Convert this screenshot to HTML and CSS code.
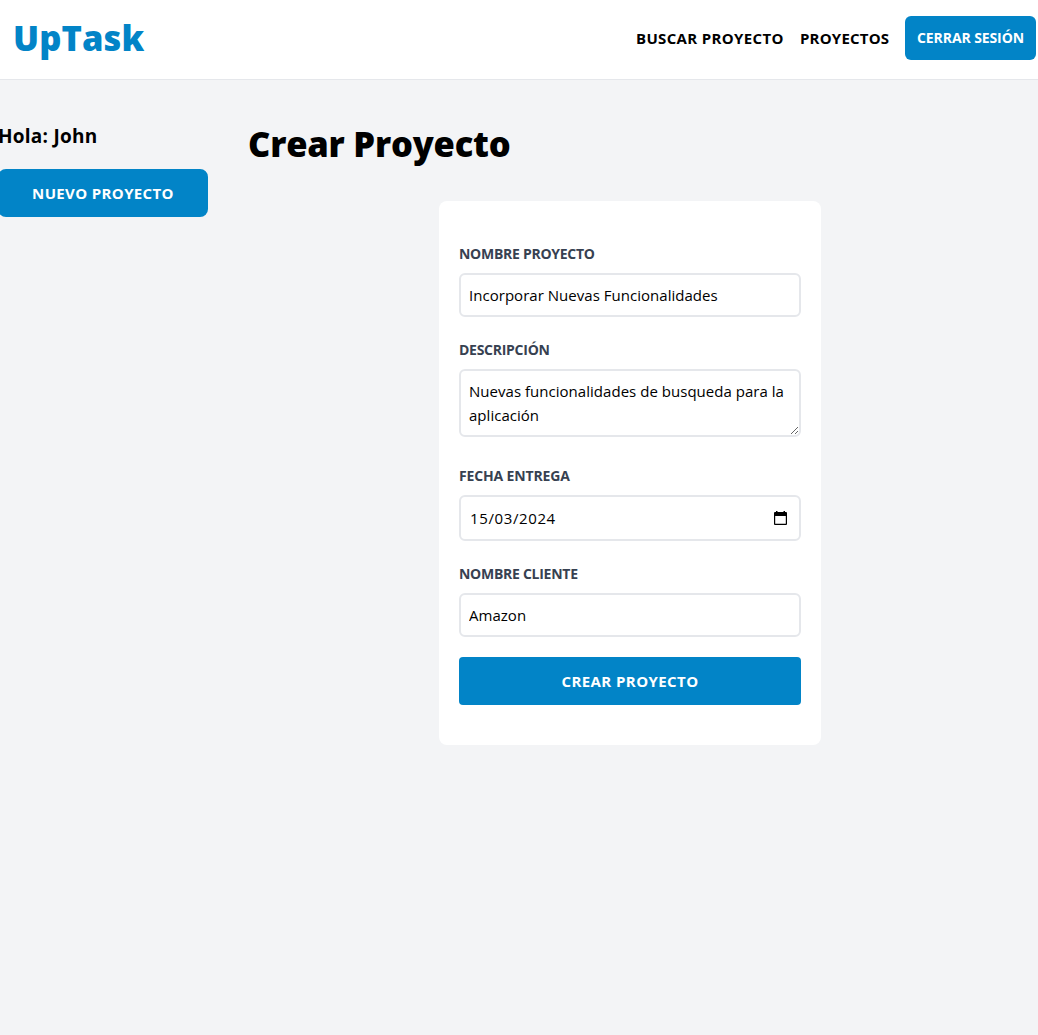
FILE: index.html
```html
<!DOCTYPE html>
<html lang="es">
<head>
<meta charset="utf-8">
<title>UpTask</title>
<link rel="stylesheet" href="styles.css">
</head>
<body>
<header class="header">
  <h2 class="logo">UpTask</h2>
  <nav class="nav">
    <a class="nav-link nav-search">Buscar Proyecto</a>
    <a class="nav-link nav-projects">Proyectos</a>
    <button class="logout" type="button">Cerrar Sesión</button>
  </nav>
</header>
<div class="layout">
  <aside class="sidebar">
    <p class="greeting">Hola: John</p>
    <a class="new-project">Nuevo Proyecto</a>
  </aside>
  <main class="main">
    <h1 class="title">Crear Proyecto</h1>
    <form class="card">
      <div class="field">
        <label class="label" for="nombre">Nombre Proyecto</label>
        <input class="input" id="nombre" type="text" value="Incorporar Nuevas Funcionalidades">
      </div>
      <div class="field field-area">
        <label class="label" for="descripcion">Descripción</label>
        <textarea class="input area" id="descripcion" spellcheck="false">Nuevas funcionalidades de busqueda para la aplicación</textarea>
      </div>
      <div class="field">
        <span class="label label-date">Fecha Entrega</span>
        <div class="input date">
          <span>15/03/2024</span>
          <svg class="calendar" width="13" height="15" viewBox="0 0 13 15"><path fill="#000" fill-rule="evenodd" d="M2 0h1.500v1H9.500V0H11v1h1a1 1 0 0 1 1 1v11a1 1 0 0 1-1 1H1a1 1 0 0 1-1-1V2a1 1 0 0 1 1-1h1zM1.200 5v7.800h10.600V5z"/></svg>
        </div>
      </div>
      <div class="field">
        <label class="label" for="cliente">Nombre Cliente</label>
        <input class="input" id="cliente" type="text" value="Amazon">
      </div>
      <button class="submit" type="button">Crear Proyecto</button>
    </form>
  </main>
</div>
</body>
</html>
```
FILE: styles.css
```css
* { box-sizing: border-box; margin: 0; }
body {
  min-height: 100vh;
  background: #f3f4f6;
  color: #000;
  font-family: "Open Sans", "Noto Sans", sans-serif;
  font-size: 16px;
  line-height: 24px;
  overflow-x: hidden;
}
.header {
  display: flex;
  justify-content: space-between;
  align-items: center;
  height: 80px;
  padding: 0 2px 4px 13px;
  background: #fff;
  border-bottom: 1px solid #e5e7eb;
}
.logo { color: #0284c7; font-size: 34.5px; line-height: 40px; font-weight: 800; letter-spacing: 0.1px; }
.nav { display: flex; align-items: center; gap: 16px; }
.nav-link { font-size: 15px; font-weight: 700; text-transform: uppercase; white-space: nowrap; }
.nav-search { width: 148px; letter-spacing: 0.34px; }
.nav-projects { width: 89px; letter-spacing: 0.2px; }
.logout {
  width: 131px;
  height: 44px;
  padding: 0;
  border: 0;
  border-radius: 6px;
  background: #0284c7;
  color: #fff;
  font: 700 14px/20px "Open Sans", "Noto Sans", sans-serif;
  letter-spacing: -0.1px;
  text-transform: uppercase;
}
.layout { display: flex; padding-top: 40px; }
.sidebar { flex: none; width: 210px; margin-left: -2px; padding-top: 2px; }
.greeting { font-size: 19px; line-height: 28px; font-weight: 700; letter-spacing: 0.25px; }
.new-project {
  display: block;
  margin-top: 19px;
  border-radius: 8px;
  padding: 12px 0;
  background: #0284c7;
  color: #fff;
  font-size: 15px;
  font-weight: 700;
  letter-spacing: 0.36px;
  text-align: center;
  text-transform: uppercase;
}
.main { flex: 1; padding: 4px 26px 0 40px; }
.title { font-size: 34.5px; line-height: 40px; font-weight: 800; letter-spacing: -0.2px; }
.card {
  width: 382px;
  margin: 37px auto 0;
  padding: 41px 20px 40px;
  border-radius: 8px;
  background: #fff;
}
.field { margin-bottom: 21px; }
.field-area { margin-bottom: 27px; }
.field:last-of-type { margin-bottom: 20px; }
.label {
  display: block;
  color: #374151;
  font-size: 14px;
  font-weight: 700;
  letter-spacing: -0.27px;
  text-transform: uppercase;
}
.label-date { letter-spacing: -0.15px; }
.input {
  display: block;
  width: 100%;
  height: 44px;
  margin-top: 7px;
  padding: 8px;
  border: 2px solid #e5e7eb;
  border-radius: 6px;
  outline: 0;
  background: #fff;
  color: #000;
  font: 400 15px/24px "Open Sans", "Noto Sans", sans-serif;
  letter-spacing: 0.03px;
}
.area { height: 68px; resize: vertical; overflow: hidden; }
.date { display: flex; justify-content: space-between; align-items: center; height: 46px; padding: 0 12px 0 9px; letter-spacing: 0.62px; }
.submit {
  display: block;
  width: 100%;
  height: 48px;
  border: 0;
  border-radius: 4px;
  background: #0284c7;
  color: #fff;
  font: 700 15px/24px "Open Sans", "Noto Sans", sans-serif;
  letter-spacing: 0.42px;
  text-transform: uppercase;
}
```
